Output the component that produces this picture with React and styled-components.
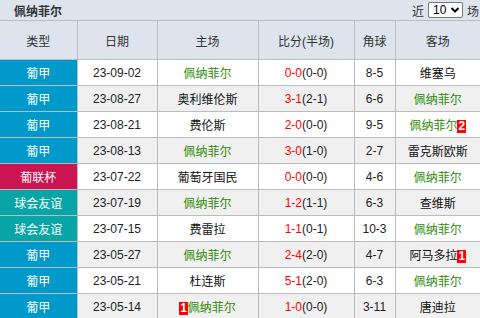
import React from 'react';
import styled, {createGlobalStyle} from 'styled-components';

const Global = createGlobalStyle`
  html, body { margin: 0; padding: 0; background: #fff; }
  body { font-family: "Liberation Sans", "Noto Sans CJK SC", sans-serif; font-size: 12px; color: #333; }
`;

const matches = [
    {type: '葡甲', kind: 'league', date: '23-09-02', home: '佩纳菲尔', homeOwn: true, score: '0-0', half: '(0-0)', corner: '8-5', away: '维塞乌'},
    {type: '葡甲', kind: 'league', date: '23-08-27', home: '奥利维伦斯', score: '3-1', half: '(2-1)', corner: '6-6', away: '佩纳菲尔', awayOwn: true},
    {type: '葡甲', kind: 'league', date: '23-08-21', home: '费伦斯', score: '2-0', half: '(0-0)', corner: '9-5', away: '佩纳菲尔', awayOwn: true, awayCard: '2'},
    {type: '葡甲', kind: 'league', date: '23-08-13', home: '佩纳菲尔', homeOwn: true, score: '3-0', half: '(1-0)', corner: '2-7', away: '雷克斯欧斯'},
    {type: '葡联杯', kind: 'cup', date: '23-07-22', home: '葡萄牙国民', score: '0-0', half: '(0-0)', corner: '4-6', away: '佩纳菲尔', awayOwn: true},
    {type: '球会友谊', kind: 'friendly', date: '23-07-19', home: '佩纳菲尔', homeOwn: true, score: '1-2', half: '(1-1)', corner: '6-3', away: '查维斯'},
    {type: '球会友谊', kind: 'friendly', date: '23-07-15', home: '费雷拉', score: '1-1', half: '(0-1)', corner: '10-3', away: '佩纳菲尔', awayOwn: true},
    {type: '葡甲', kind: 'league', date: '23-05-27', home: '佩纳菲尔', homeOwn: true, score: '2-4', half: '(2-0)', corner: '4-7', away: '阿马多拉', awayCard: '1'},
    {type: '葡甲', kind: 'league', date: '23-05-21', home: '杜连斯', score: '5-1', half: '(2-0)', corner: '6-3', away: '佩纳菲尔', awayOwn: true},
    {type: '葡甲', kind: 'league', date: '23-05-14', home: '佩纳菲尔', homeOwn: true, homeCard: '1', score: '1-0', half: '(0-0)', corner: '3-11', away: '唐迪拉'},
];

const kindColors = {
    league: '#0099cc',
    cup: '#cc1452',
    friendly: '#07a5a5',
};

const Wrap = styled.div`
  width: 480px;
  background: #dde4ee;
`;

const TitleBar = styled.div`
  height: 20px;
  display: flex;
  align-items: center;
  justify-content: space-between;
  padding: 0 0 0 14px;
  border-bottom: 1px solid #bcbcbc;
  box-sizing: content-box;
  & .name {
    font-weight: bold;
    color: #333;
    font-size: 12px;
  }
`;

const Picker = styled.div`
  display: flex;
  align-items: center;
  gap: 4px;
  padding-right: 1px;
  font-size: 12px;
  color: #333;
`;

const SelectBox = styled.span`
  display: inline-flex;
  align-items: center;
  justify-content: space-between;
  width: 35px;
  height: 16px;
  box-sizing: border-box;
  padding: 0 2px 0 4px;
  border: 1px solid #777;
  border-radius: 2px;
  background: #fff;
  color: #000;
`;

const Table = styled.table`
  width: 480px;
  border-collapse: collapse;
  table-layout: fixed;
  background: #fff;
`;

const Th = styled.th`
  height: 38px;
  padding: 0;
  font-weight: normal;
  color: #333;
  background: #dde4ee;
  border: 1px solid #bcbcbc;
  border-top: none;
  &:first-child { border-left: none; }
  &:last-child { border-right: none; }
`;

const Row = styled.tr`
  background: ${p => (p.$alt ? '#f0f0f0' : '#fff')};
`;

const Td = styled.td`
  height: 25px;
  padding: 0;
  text-align: center;
  white-space: nowrap;
  color: #222;
  border: 1px solid #bcbcbc;
  &:first-child { border-left: none; }
  &:last-child { border-right: none; }
`;

const TypeCell = styled(Td)`
  background: ${p => kindColors[p.$kind]};
  color: #fff;
  border-color: #bcbcbc;
`;

const Team = styled.span`
  color: ${p => (p.$own ? '#2a8a00' : '#111')};
`;

const Score = styled.span`
  color: #f00;
`;

const Card = styled.span`
  display: inline-block;
  background: #f00;
  color: #fff;
  font-weight: bold;
  padding: 0 1px;
  line-height: 13px;
`;

const App = () => {
    return (
        <>
            <Global/>
            <Wrap>
                <TitleBar>
                    <span className="name">佩纳菲尔</span>
                    <Picker>
                        <span>近</span>
                        <SelectBox>
                            10
                            <svg width="10" height="8" viewBox="0 0 10 8">
                                <path d="M1.5 2 L5 5.5 L8.5 2" fill="none" stroke="#000" strokeWidth="2"/>
                            </svg>
                        </SelectBox>
                        <span>场</span>
                    </Picker>
                </TitleBar>
                <Table>
                    <colgroup>
                        <col style={{width: 77}}/>
                        <col style={{width: 80}}/>
                        <col style={{width: 101}}/>
                        <col style={{width: 96}}/>
                        <col style={{width: 41}}/>
                        <col/>
                    </colgroup>
                    <thead>
                    <tr>
                        <Th>类型</Th>
                        <Th>日期</Th>
                        <Th>主场</Th>
                        <Th>比分(半场)</Th>
                        <Th>角球</Th>
                        <Th>客场</Th>
                    </tr>
                    </thead>
                    <tbody>
                    {matches.map((m, i) => (
                        <Row key={i} $alt={i % 2 === 1}>
                            <TypeCell $kind={m.kind}>{m.type}</TypeCell>
                            <Td>{m.date}</Td>
                            <Td>
                                {m.homeCard && <Card>{m.homeCard}</Card>}
                                <Team $own={m.homeOwn}>{m.home}</Team>
                            </Td>
                            <Td><Score>{m.score}</Score>{m.half}</Td>
                            <Td>{m.corner}</Td>
                            <Td>
                                <Team $own={m.awayOwn}>{m.away}</Team>
                                {m.awayCard && <Card>{m.awayCard}</Card>}
                            </Td>
                        </Row>
                    ))}
                    </tbody>
                </Table>
            </Wrap>
        </>
    );
};

export default App;
